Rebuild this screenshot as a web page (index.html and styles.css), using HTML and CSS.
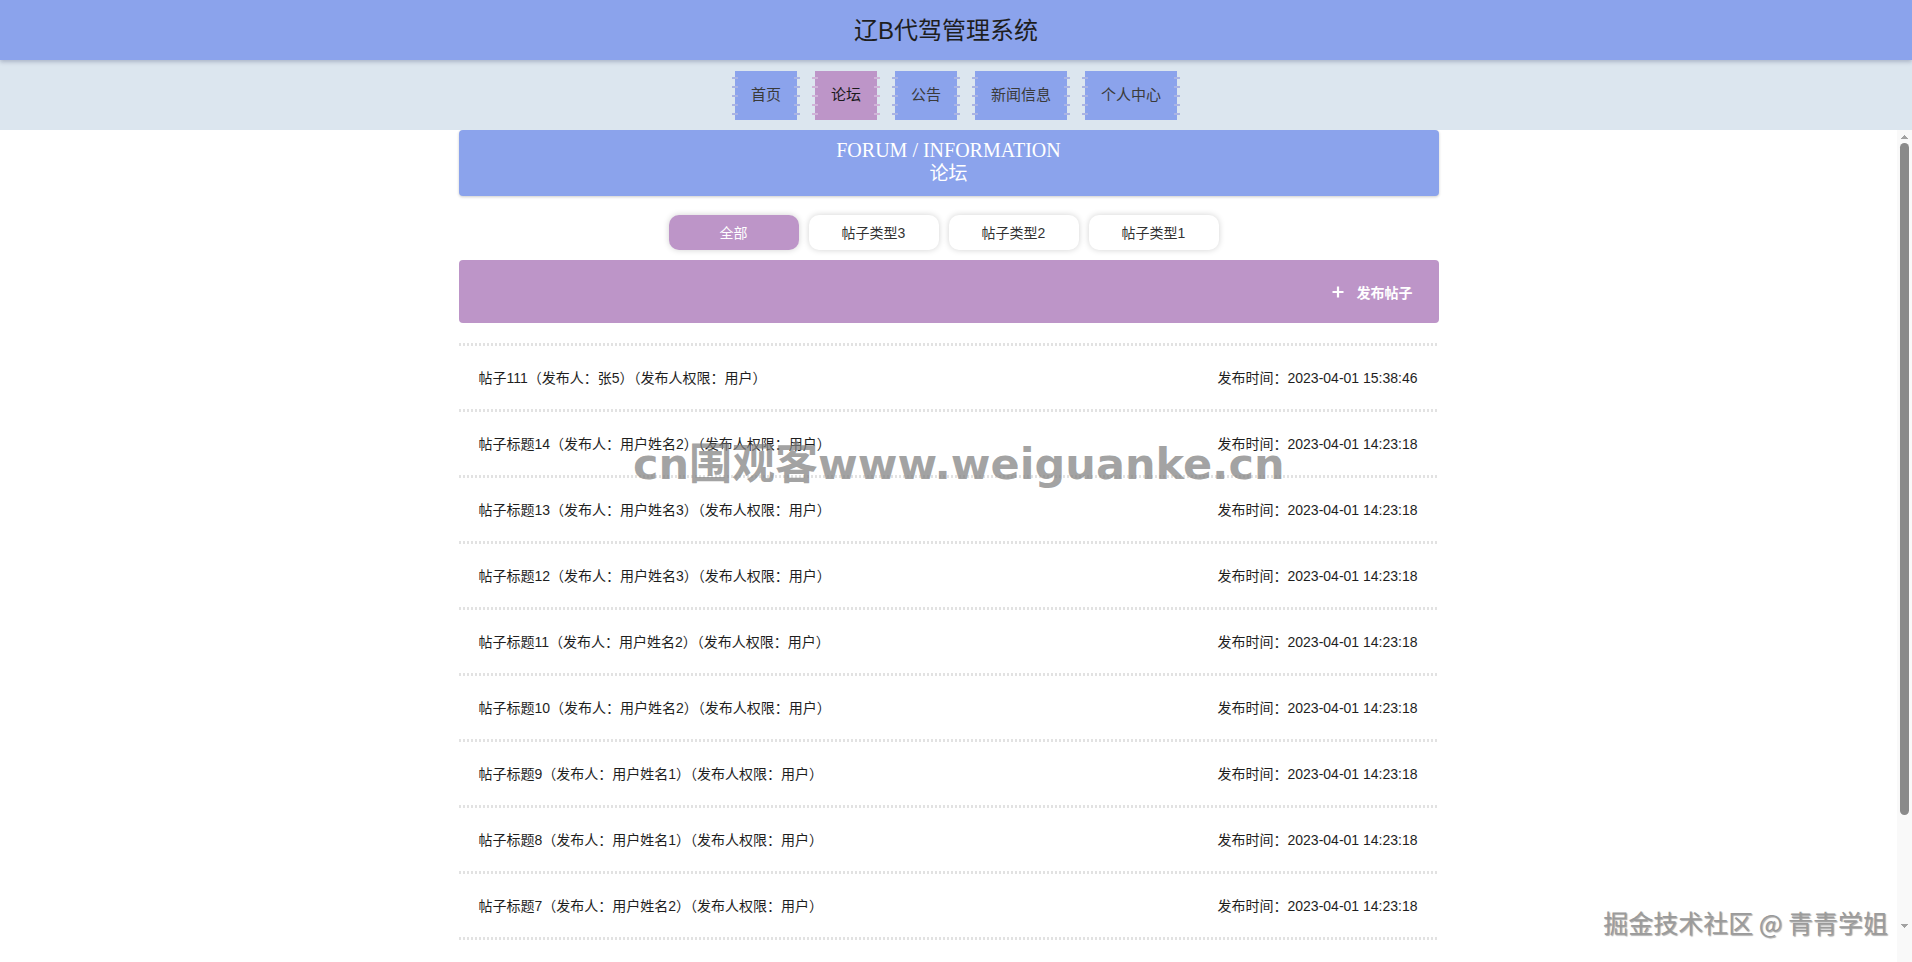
FILE: index.html
```html
<!DOCTYPE html>
<html lang="zh-CN">
<head>
<meta charset="utf-8">
<title>辽B代驾管理系统 - 论坛</title>
<link rel="stylesheet" href="styles.css">
</head>
<body>
  <header class="top-bar">
    <h1 class="site-title">辽B代驾管理系统</h1>
  </header>

  <nav class="main-nav">
    <a class="nav-item" href="#">首页</a>
    <a class="nav-item active" href="#">论坛</a>
    <a class="nav-item" href="#">公告</a>
    <a class="nav-item" href="#">新闻信息</a>
    <a class="nav-item" href="#">个人中心</a>
  </nav>

  <div class="workspace">
    <main class="page">
      <div class="container">
        <section class="section-banner">
          <div class="banner-en">FORUM / INFORMATION</div>
          <div class="banner-cn">论坛</div>
        </section>

        <div class="type-tabs">
          <button class="type-tab active">全部</button>
          <button class="type-tab">帖子类型3</button>
          <button class="type-tab">帖子类型2</button>
          <button class="type-tab">帖子类型1</button>
        </div>

        <div class="publish-bar">
          <button class="publish-btn">
            <svg class="plus-icon" viewBox="0 0 12 12" width="12" height="12" aria-hidden="true">
              <path d="M6 0.5v11M0.5 6h11" stroke="#fff" stroke-width="2.2" fill="none"/>
            </svg>
            发布帖子
          </button>
        </div>

        <ul class="post-list">
          <li class="post-row"><span class="post-title">帖子111（发布人：张5）（发布人权限：用户）</span><span class="post-time">发布时间：2023-04-01 15:38:46</span></li>
          <li class="post-row"><span class="post-title">帖子标题14（发布人：用户姓名2）（发布人权限：用户）</span><span class="post-time">发布时间：2023-04-01 14:23:18</span></li>
          <li class="post-row"><span class="post-title">帖子标题13（发布人：用户姓名3）（发布人权限：用户）</span><span class="post-time">发布时间：2023-04-01 14:23:18</span></li>
          <li class="post-row"><span class="post-title">帖子标题12（发布人：用户姓名3）（发布人权限：用户）</span><span class="post-time">发布时间：2023-04-01 14:23:18</span></li>
          <li class="post-row"><span class="post-title">帖子标题11（发布人：用户姓名2）（发布人权限：用户）</span><span class="post-time">发布时间：2023-04-01 14:23:18</span></li>
          <li class="post-row"><span class="post-title">帖子标题10（发布人：用户姓名2）（发布人权限：用户）</span><span class="post-time">发布时间：2023-04-01 14:23:18</span></li>
          <li class="post-row"><span class="post-title">帖子标题9（发布人：用户姓名1）（发布人权限：用户）</span><span class="post-time">发布时间：2023-04-01 14:23:18</span></li>
          <li class="post-row"><span class="post-title">帖子标题8（发布人：用户姓名1）（发布人权限：用户）</span><span class="post-time">发布时间：2023-04-01 14:23:18</span></li>
          <li class="post-row"><span class="post-title">帖子标题7（发布人：用户姓名2）（发布人权限：用户）</span><span class="post-time">发布时间：2023-04-01 14:23:18</span></li>
          <li class="post-row"><span class="post-title">帖子标题6（发布人：用户姓名3）（发布人权限：用户）</span><span class="post-time">发布时间：2023-04-01 14:23:18</span></li>
        </ul>

        <div class="pager">
          <span class="pager-total">共 14 条</span>
          <button class="pager-btn">&lt;</button>
          <button class="pager-btn current">1</button>
          <button class="pager-btn">2</button>
          <button class="pager-btn">&gt;</button>
        </div>
      </div>
    </main>

    <div class="scroll-rail" aria-hidden="true">
      <span class="rail-arrow up"></span>
      <span class="rail-thumb"></span>
      <span class="rail-arrow down"></span>
    </div>
  </div>

  <div class="wm-site">cn围观客www.weiguanke.cn</div>
  <div class="wm-author">掘金技术社区 @ 青青学姐</div>
</body>
</html>
```

FILE: styles.css
```css
* {
  box-sizing: border-box;
}

html,
body {
  margin: 0;
  height: 100%;
}

body {
  position: relative;
  display: flex;
  flex-direction: column;
  overflow: hidden;
  background: #fff;
  color: #222;
  font-family: "Liberation Sans", "Noto Sans CJK SC", sans-serif;
}

/* ---------- top title bar ---------- */
.top-bar {
  flex: 0 0 60px;
  position: relative;
  z-index: 2;
  display: flex;
  align-items: center;
  justify-content: center;
  padding: 0 20px 4px 0;
  background: #8ba3ec;
  box-shadow: 0 2px 4px rgba(60, 70, 110, 0.3);
}

.site-title {
  margin: 0;
  font-size: 24px;
  font-weight: normal;
  color: #1e1e1e;
}

/* ---------- main navigation ---------- */
.main-nav {
  flex: 0 0 70px;
  display: flex;
  align-items: center;
  justify-content: center;
  gap: 18px;
  background: #dce6ef;
}

.nav-item {
  position: relative;
  height: 49px;
  padding: 0 16px 3px;
  display: flex;
  align-items: center;
  background: #8ba3ec;
  color: #3a3a3a;
  font-size: 15px;
  text-decoration: none;
}

/* stitched edges on both sides of a nav tab */
.nav-item::before,
.nav-item::after {
  content: "";
  position: absolute;
  top: 6px;
  height: 39px;
  width: 6px;
  background: repeating-linear-gradient(to bottom, #aab4e4 0 2px, transparent 2px 9px);
}

.nav-item::before {
  left: -3px;
}

.nav-item::after {
  right: -3px;
}

.nav-item.active {
  background: #bd95c8;
  color: #1a1a1a;
}

.nav-item.active::before,
.nav-item.active::after {
  background: repeating-linear-gradient(to bottom, #d0b4d8 0 2px, transparent 2px 9px);
}

/* ---------- content area with its scroll rail ---------- */
.workspace {
  flex: 1;
  min-height: 0;
  display: flex;
}

.page {
  flex: 1;
  min-width: 0;
  overflow: hidden;
}

.scroll-rail {
  flex: 0 0 15px;
  display: flex;
  flex-direction: column;
  align-items: center;
  padding-bottom: 30px;
  background: #f9f9f9;
}

.rail-arrow {
  flex: 0 0 13px;
  width: 15px;
  background-repeat: no-repeat;
  background-position: center;
  background-size: 7px 4px;
}

.rail-arrow.up {
  background-image: conic-gradient(from 139deg at 50% 0%, #a3a3a3 0 82deg, transparent 82deg);
}

.rail-arrow.down {
  margin-top: auto;
  background-image: conic-gradient(from -41deg at 50% 100%, #a3a3a3 0 82deg, transparent 82deg);
}

.rail-thumb {
  flex: 0 0 672px;
  width: 9px;
  border-radius: 5px;
  background: #8a8a8a;
}

.container {
  width: 980px;
  margin: 0 auto;
}

.section-banner {
  height: 66px;
  padding-top: 8px;
  border-radius: 4px;
  background: #8ba3ec;
  box-shadow: 0 1px 3px rgba(0, 0, 0, 0.2);
  color: #fff;
  text-align: center;
  font-family: "Liberation Serif", "Noto Sans CJK SC", serif;
  font-size: 20px;
  line-height: 24px;
}

.banner-cn {
  font-size: 19px;
}

/* ---------- category tabs ---------- */
.type-tabs {
  display: flex;
  justify-content: center;
  margin-top: 19px;
}

.type-tab {
  width: 130px;
  height: 35px;
  margin-right: 10px;
  padding-bottom: 2px;
  border: 0;
  border-radius: 10px;
  background: #fff;
  box-shadow: 0 0 6px rgba(0, 0, 0, 0.18);
  color: #333;
  font: 14px "Liberation Sans", "Noto Sans CJK SC", sans-serif;
  cursor: pointer;
}

.type-tab.active {
  background: #bd95c8;
  color: #fff;
}

/* ---------- publish bar ---------- */
.publish-bar {
  height: 63px;
  margin-top: 10px;
  display: flex;
  align-items: center;
  justify-content: flex-end;
  padding-right: 26px;
  border-radius: 4px;
  background: #bd95c8;
}

.publish-btn {
  display: flex;
  align-items: center;
  gap: 13px;
  padding: 0;
  border: 0;
  background: none;
  color: #fff;
  font: 600 14px "Liberation Sans", "Noto Sans CJK SC", sans-serif;
  cursor: pointer;
}

.plus-icon {
  display: block;
}

/* ---------- post list ---------- */
.post-list {
  list-style: none;
  margin: 20px 0 0;
  padding: 0 0 3px;
  background: repeating-linear-gradient(to right, #e2e2e2 0 2px, transparent 2px 4px) left bottom / 100% 3px no-repeat;
}

.post-row {
  height: 66px;
  display: flex;
  align-items: center;
  justify-content: space-between;
  padding: 1px 21px 0 20px;
  background: repeating-linear-gradient(to right, #e2e2e2 0 2px, transparent 2px 4px) left top / 100% 3px no-repeat;
  font-size: 14px;
  color: #1e1e1e;
}

/* ---------- pager ---------- */
.pager {
  height: 32px;
  margin: 27px 0 55px;
  display: flex;
  align-items: center;
  justify-content: center;
  gap: 8px;
  font-size: 13px;
  color: #606266;
}

.pager-btn {
  min-width: 30px;
  height: 28px;
  border: 0;
  border-radius: 2px;
  background: #f4f4f5;
  color: #606266;
  font: 13px "Liberation Sans", sans-serif;
}

.pager-btn.current {
  background: #bd95c8;
  color: #fff;
}

/* ---------- overlay marks ---------- */
.wm-site {
  position: absolute;
  left: 633px;
  top: 443px;
  font: bold 43px/1 "DejaVu Sans", "Noto Sans CJK SC", sans-serif;
  color: rgba(128, 128, 128, 0.72);
  white-space: nowrap;
  pointer-events: none;
}

.wm-author {
  position: absolute;
  right: 24px;
  top: 906px;
  font: 25px/32px "Noto Sans CJK SC", sans-serif;
  color: #9b9b9b;
  text-shadow: 1px 1px 1px rgba(0, 0, 0, 0.35), -1px -1px 0 rgba(255, 255, 255, 0.8);
  white-space: nowrap;
  pointer-events: none;
}
```
